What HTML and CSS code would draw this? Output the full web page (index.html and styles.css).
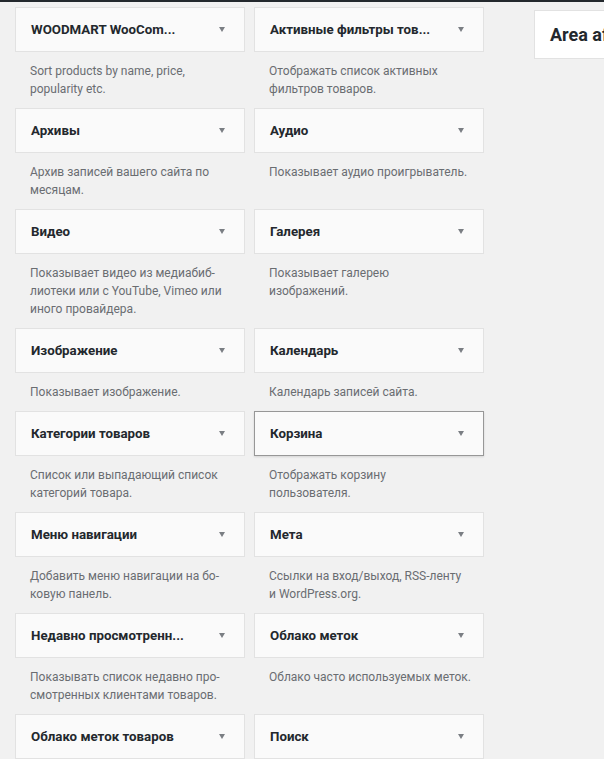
FILE: index.html
```html
<!DOCTYPE html>
<html lang="ru">
<head>
<meta charset="utf-8">
<title>Виджеты</title>
<link rel="stylesheet" href="styles.css">
</head>
<body>
<div class="adminbar"></div>
<div class="wrap">
  <div class="widget-grid">
    <div class="widget">
      <div class="widget-top"><span class="widget-title">WOODMART WooCom...</span><span class="arrow"></span></div>
      <p class="widget-desc">Sort products by name, price,<br>popularity etc.</p>
    </div>
    <div class="widget">
      <div class="widget-top"><span class="widget-title">Активные фильтры тов...</span><span class="arrow"></span></div>
      <p class="widget-desc">Отображать список активных<br>фильтров товаров.</p>
    </div>
    <div class="widget">
      <div class="widget-top"><span class="widget-title">Архивы</span><span class="arrow"></span></div>
      <p class="widget-desc">Архив записей вашего сайта по<br>месяцам.</p>
    </div>
    <div class="widget">
      <div class="widget-top"><span class="widget-title">Аудио</span><span class="arrow"></span></div>
      <p class="widget-desc">Показывает аудио проигрыватель.</p>
    </div>
    <div class="widget">
      <div class="widget-top"><span class="widget-title">Видео</span><span class="arrow"></span></div>
      <p class="widget-desc">Показывает видео из медиабиб-<br>лиотеки или с YouTube, Vimeo или<br>иного провайдера.</p>
    </div>
    <div class="widget">
      <div class="widget-top"><span class="widget-title">Галерея</span><span class="arrow"></span></div>
      <p class="widget-desc">Показывает галерею<br>изображений.</p>
    </div>
    <div class="widget">
      <div class="widget-top"><span class="widget-title">Изображение</span><span class="arrow"></span></div>
      <p class="widget-desc">Показывает изображение.</p>
    </div>
    <div class="widget">
      <div class="widget-top"><span class="widget-title">Календарь</span><span class="arrow"></span></div>
      <p class="widget-desc">Календарь записей сайта.</p>
    </div>
    <div class="widget">
      <div class="widget-top"><span class="widget-title">Категории товаров</span><span class="arrow"></span></div>
      <p class="widget-desc">Список или выпадающий список<br>категорий товара.</p>
    </div>
    <div class="widget">
      <div class="widget-top is-hover"><span class="widget-title">Корзина</span><span class="arrow"></span></div>
      <p class="widget-desc">Отображать корзину<br>пользователя.</p>
    </div>
    <div class="widget">
      <div class="widget-top"><span class="widget-title">Меню навигации</span><span class="arrow"></span></div>
      <p class="widget-desc">Добавить меню навигации на бо-<br>ковую панель.</p>
    </div>
    <div class="widget">
      <div class="widget-top"><span class="widget-title">Мета</span><span class="arrow"></span></div>
      <p class="widget-desc">Ссылки на вход/выход, RSS-ленту<br>и WordPress.org.</p>
    </div>
    <div class="widget">
      <div class="widget-top"><span class="widget-title">Недавно просмотренн...</span><span class="arrow"></span></div>
      <p class="widget-desc">Показывать список недавно про-<br>смотренных клиентами товаров.</p>
    </div>
    <div class="widget">
      <div class="widget-top"><span class="widget-title">Облако меток</span><span class="arrow"></span></div>
      <p class="widget-desc">Облако часто используемых меток.</p>
    </div>
    <div class="widget">
      <div class="widget-top"><span class="widget-title">Облако меток товаров</span><span class="arrow"></span></div>
    </div>
    <div class="widget">
      <div class="widget-top"><span class="widget-title">Поиск</span><span class="arrow"></span></div>
    </div>
  </div>
  <div class="sidebars">
    <div class="sidebar-name"><h2 class="sidebar-title">Area af</h2></div>
  </div>
</div>
</body>
</html>
```
FILE: styles.css
```css
html {
  overflow: hidden;
}
body {
  margin: 0;
  background: #f1f1f1;
  font-family: Roboto, "Liberation Sans", sans-serif;
  color: #23282d;
}
.adminbar {
  height: 2px;
  background: #23282d;
}
.wrap {
  display: flex;
  align-items: flex-start;
  padding: 5px 0 0 15px;
}
.widget-grid {
  display: grid;
  grid-template-columns: 230px 230px;
  column-gap: 9px;
  flex-shrink: 0;
}
.widget {
  min-width: 0;
}
.widget-top {
  box-sizing: border-box;
  height: 45px;
  display: flex;
  align-items: center;
  justify-content: space-between;
  padding: 0 19px 0 15px;
  background: #fafafa;
  border: 1px solid #e2e2e2;
}
.widget-top.is-hover {
  border-color: #979797;
  box-shadow: 0 1px 2px rgba(0, 0, 0, 0.12);
}
.widget-title {
  font-size: 13.3px;
  font-weight: 700;
  color: #23282d;
  white-space: nowrap;
}
.arrow {
  width: 0;
  height: 0;
  border-left: 3.5px solid transparent;
  border-right: 3.5px solid transparent;
  border-top: 5px solid #7a7e83;
}
.widget-desc {
  margin: 0;
  padding: 10px 15px;
  font-size: 12px;
  line-height: 18px;
  color: #6a6d71;
  white-space: nowrap;
}
.sidebars {
  margin-left: 50px;
  flex-shrink: 0;
  width: 300px;
}
.sidebar-name {
  margin-top: 3px;
  box-sizing: border-box;
  height: 49px;
  display: flex;
  align-items: center;
  padding: 0 15px;
  background: #fff;
  border: 1px solid #e2e2e2;
}
.sidebar-title {
  margin: 0;
  font-size: 18px;
  font-weight: 700;
  color: #23282d;
  white-space: nowrap;
}
```
